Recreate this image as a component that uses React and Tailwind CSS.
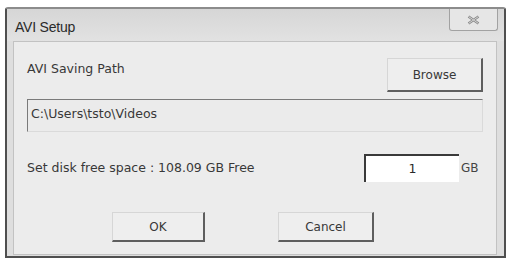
import React from "react";

const font = { fontFamily: '"DejaVu Sans", Verdana, sans-serif' };
const titleFont = { fontFamily: '"Liberation Sans", Arial, sans-serif' };

const WinButton = ({ children, className = "" }) => (
  <button
    className={`flex items-center justify-center bg-[#eeeeee] border border-[#d6d6d6] border-r-2 border-b-2 border-r-[#5e5e5e] border-b-[#5e5e5e] text-[12px] text-[#383838] ${className}`}
  >
    {children}
  </button>
);

export default function App() {
  return (
    <div className="w-[509px] h-[262px] bg-white pt-[7px] pl-[5px]" style={font}>
      <div className="w-[501px] h-[251px] flex flex-col bg-[#dedede] border-2 border-[#4f4f4f] border-t-[#8c8c8c] rounded-tl-[3px] rounded-tr-[3px]">
        {/* title bar */}
        <div className="h-[32px] flex items-start justify-between bg-gradient-to-b from-[#d6d6d6] to-[#e2e2e2]">
          <span className="pl-[8px] pt-[11px] text-[14px] leading-none text-[#2a2a2a] tracking-[-0.2px]" style={titleFont}>
            AVI Setup
          </span>
          <div className="mr-[6px] w-[49px] h-[22px] flex items-center justify-center border border-t-0 border-[#a2a2a2] rounded-b-[3px] bg-[#e6e6e6]">
            <svg width="13" height="10" viewBox="0 0 13 10">
              <path d="M1.5 1.5 L11.5 8.5 M11.5 1.5 L1.5 8.5" stroke="#8a8a8a" strokeWidth="2.6" fill="none" />
              <path d="M1.5 1.5 L11.5 8.5 M11.5 1.5 L1.5 8.5" stroke="#d4d4d4" strokeWidth="1" fill="none" />
            </svg>
          </div>
        </div>

        {/* content panel */}
        <div className="flex-1 mx-[6px] mr-[7px] mb-[1px] bg-[#ececec] border border-[#c2c2c2] px-[13px] pt-[16px] flex flex-col text-[12.5px] text-[#383838]">
          <div className="h-[34px] flex items-start justify-between">
            <span className="pt-[5px] leading-none">AVI Saving Path</span>
            <WinButton className="w-[96px] h-[34px]">Browse</WinButton>
          </div>

          <div className="mt-[7px] h-[33px] flex items-start pt-[5px] bg-[#ebebeb] border border-[#dadada] border-t-[#7a7a7a] border-l-[#7a7a7a] pl-[3px]">
            C:\Users\tsto\Videos
          </div>

          <div className="mt-[22px] h-[28px] flex items-center">
            <span className="flex-1">Set disk free space : 108.09 GB Free</span>
            <div className="w-[95px] h-[28px] flex items-center justify-center bg-white border-t-2 border-l-2 border-[#3a3a3a] text-[#2a2a2a]">
              1
            </div>
            <span className="w-[24px] pl-[2px] text-[12px] text-[#444]">GB</span>
          </div>

          <div className="mt-[30px] flex">
            <WinButton className="ml-[85px] w-[93px] h-[30px]">OK</WinButton>
            <WinButton className="ml-[73px] w-[96px] h-[30px]">Cancel</WinButton>
          </div>
        </div>
      </div>
    </div>
  );
}
